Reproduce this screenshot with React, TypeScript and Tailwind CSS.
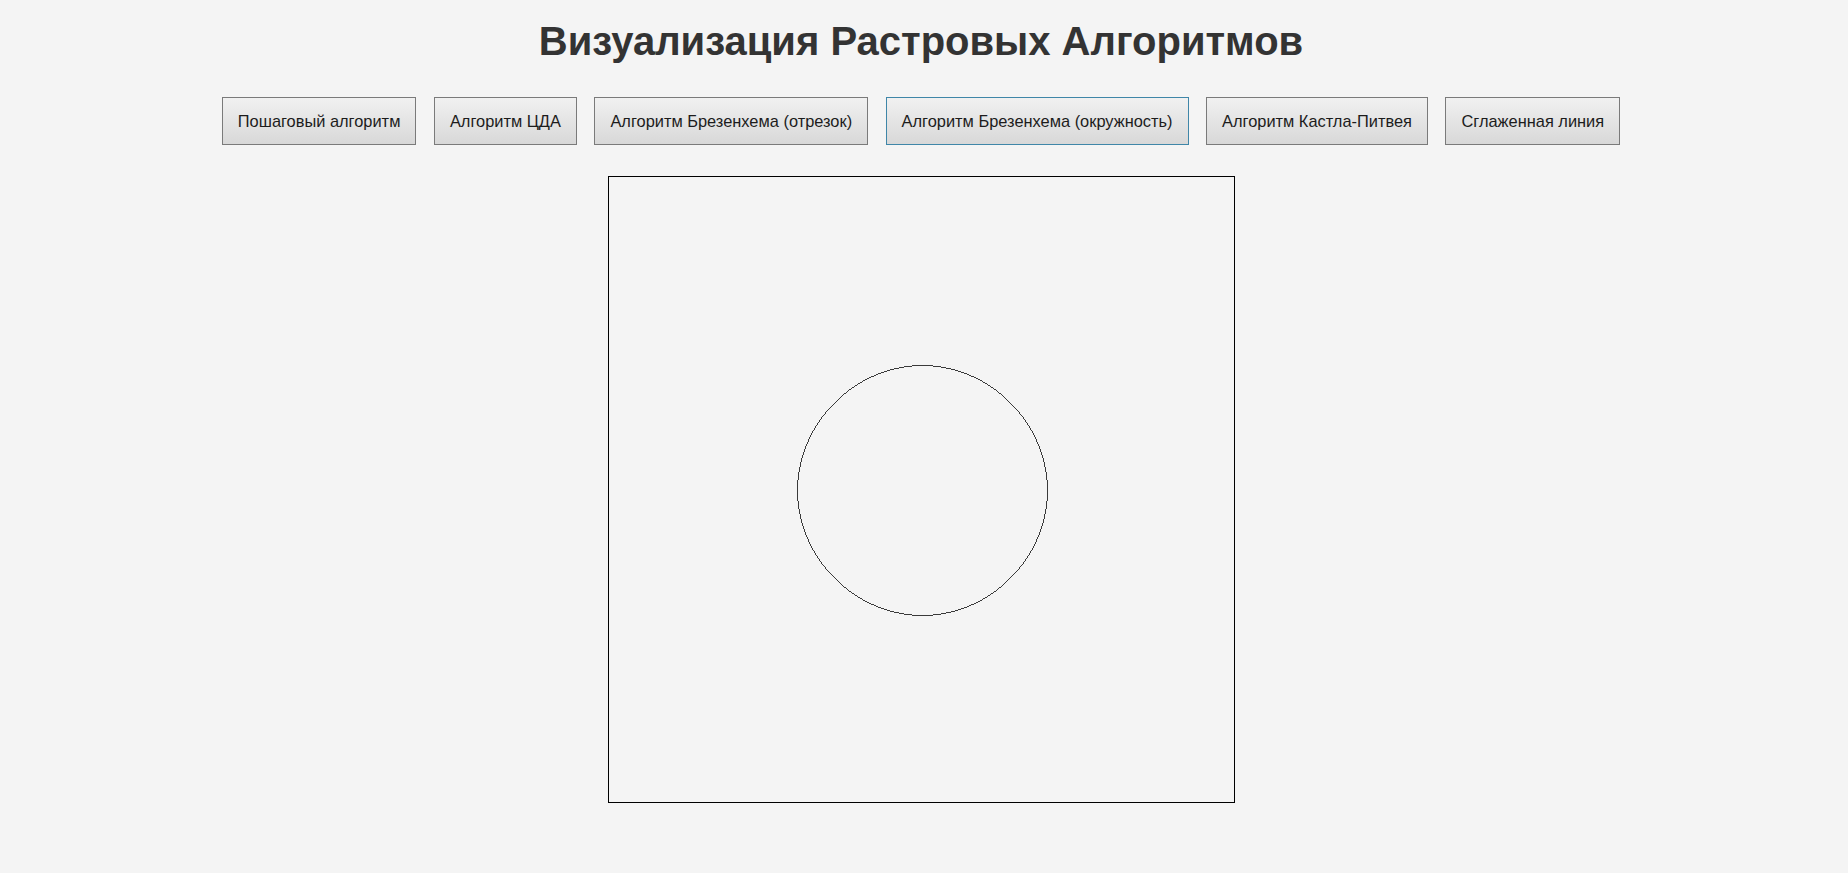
import { useEffect, useRef } from "react";

const algorithms = [
  "Пошаговый алгоритм",
  "Алгоритм ЦДА",
  "Алгоритм Брезенхема (отрезок)",
  "Алгоритм Брезенхема (окружность)",
  "Алгоритм Кастла-Питвея",
  "Сглаженная линия",
];

const ACTIVE = 3;

function plot(ctx: CanvasRenderingContext2D, x: number, y: number) {
  ctx.fillRect(x, y, 1, 1);
}

function bresenhamCircle(
  ctx: CanvasRenderingContext2D,
  cx: number,
  cy: number,
  r: number
) {
  let x = 0;
  let y = r;
  let d = 3 - 2 * r;
  while (y >= x) {
    plot(ctx, cx + x, cy + y);
    plot(ctx, cx - x, cy + y);
    plot(ctx, cx + x, cy - y);
    plot(ctx, cx - x, cy - y);
    plot(ctx, cx + y, cy + x);
    plot(ctx, cx - y, cy + x);
    plot(ctx, cx + y, cy - x);
    plot(ctx, cx - y, cy - x);
    x++;
    if (d > 0) {
      y--;
      d = d + 4 * (x - y) + 10;
    } else {
      d = d + 4 * x + 6;
    }
  }
}

export default function App() {
  const canvasRef = useRef<HTMLCanvasElement>(null);

  useEffect(() => {
    const ctx = canvasRef.current?.getContext("2d");
    if (!ctx) return;
    ctx.clearRect(0, 0, 625, 625);
    ctx.fillStyle = "#3a3a3a";
    bresenhamCircle(ctx, 313, 313, 125);
  }, []);

  return (
    <div className="min-h-screen bg-[#f4f4f4] pt-[19px] pr-[6px] flex flex-col items-center font-['Liberation_Sans',Arial,sans-serif]">
      <h1 className="text-[40px] leading-[44px] font-bold text-[#333333]">
        Визуализация Растровых Алгоритмов
      </h1>

      <div className="mt-[34px] flex items-center gap-[17.5px]">
        {algorithms.map((name, i) => (
          <button
            key={name}
            className={`h-[48px] px-[15px] border text-[16.4px] text-[#1c1c1c] bg-linear-to-b from-[#f1f1f1] to-[#d8d8d8] ${
              i === ACTIVE ? "border-[#3f86a8]" : "border-[#7a7a7a]"
            }`}
          >
            {name}
          </button>
        ))}
      </div>

      <canvas
        ref={canvasRef}
        width={625}
        height={625}
        className="mt-[31px] border border-black"
      />
    </div>
  );
}
